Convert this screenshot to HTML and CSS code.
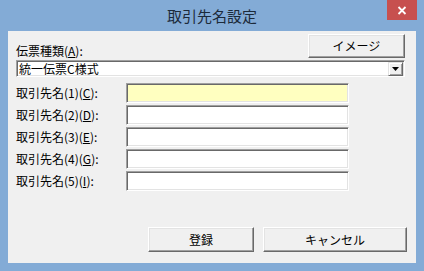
FILE: index.html
```html
<!DOCTYPE html>
<html lang="ja">
<head>
<meta charset="utf-8">
<title>取引先名設定</title>
<link rel="stylesheet" href="styles.css">
</head>
<body>
<div class="window">
  <div class="titlebar">
    <span class="title">取引先名設定</span>
    <div class="close"><svg width="10" height="9" viewBox="0 0 10 9"><path d="M1.5 1 L8.5 8 M8.5 1 L1.5 8" stroke="#fff" stroke-width="1.8" fill="none"/></svg></div>
  </div>
  <div class="client">
    <div class="toprow">
      <span class="label">伝票種類(<u>A</u>):</span>
      <div class="btn btn-image">イメージ</div>
    </div>
    <div class="combo">
      <span class="combo-text">統一伝票C様式</span>
      <div class="combo-arrow"><svg width="7" height="4" viewBox="0 0 7 4"><path d="M0 0 H7 L3.5 4 Z" fill="#000"/></svg></div>
    </div>
    <div class="fields">
      <div class="row"><span class="label">取引先名(1)(<u>C</u>):</span><div class="field active"></div></div>
      <div class="row"><span class="label">取引先名(2)(<u>D</u>):</span><div class="field"></div></div>
      <div class="row"><span class="label">取引先名(3)(<u>E</u>):</span><div class="field"></div></div>
      <div class="row"><span class="label">取引先名(4)(<u>G</u>):</span><div class="field"></div></div>
      <div class="row"><span class="label">取引先名(5)(<u>I</u>):</span><div class="field"></div></div>
    </div>
    <div class="buttons">
      <div class="btn btn-ok">登録</div>
      <div class="btn btn-cancel">キャンセル</div>
    </div>
  </div>
</div>
</body>
</html>
```
FILE: styles.css
```css
html, body {
  margin: 0;
  padding: 0;
  background: #83abd6;
}
.window {
  width: 424px;
  height: 271px;
  box-sizing: border-box;
  background: #83abd6;
  padding: 0 8px 8px 8px;
  font-family: "Noto Sans CJK JP", "Liberation Sans", sans-serif;
  font-size: 12px;
  color: #000;
}
.titlebar {
  position: relative;
  height: 31px;
  display: flex;
  justify-content: center;
  align-items: flex-start;
}
.title {
  font-size: 15px;
  line-height: 20px;
  padding-top: 6px;
  color: #1c2a3a;
  margin-left: 0;
}
.close {
  position: absolute;
  right: -1px;
  top: 0;
  width: 30px;
  height: 20px;
  background: #c7504f;
  display: flex;
  align-items: center;
  justify-content: center;
}
.client {
  background: #f0f0f0;
  height: 232px;
  box-sizing: border-box;
  padding: 3px 9px 0 8px;
  display: flex;
  flex-direction: column;
}
.toprow {
  display: flex;
  justify-content: space-between;
  align-items: flex-end;
  height: 24px;
  margin-right: 2px;
}
.label {
  line-height: 14px;
  white-space: nowrap;
}
.label u {
  text-decoration-thickness: 1px;
  text-underline-offset: 1px;
}
.btn {
  box-sizing: border-box;
  background: #f0f0f0;
  border-top: 1px solid #fff;
  border-left: 1px solid #fff;
  border-right: 1px solid #696969;
  border-bottom: 1px solid #696969;
  box-shadow: inset -1px -1px 0 #a0a0a0, inset 1px 1px 0 #e3e3e3;
  display: flex;
  align-items: center;
  justify-content: center;
  line-height: 14px;
}
.btn-image {
  width: 97px;
  height: 24px;
}
.combo {
  margin-top: 2px;
  margin-right: 2px;
  height: 17px;
  box-sizing: border-box;
  background: #fff;
  border-top: 1px solid #a0a0a0;
  border-left: 1px solid #a0a0a0;
  border-right: 1px solid #fff;
  border-bottom: 1px solid #fff;
  box-shadow: inset 1px 1px 0 #696969, inset -1px -1px 0 #e3e3e3;
  display: flex;
  align-items: center;
  padding: 0 1px 0 2px;
}
.combo-text {
  flex: 1;
  line-height: 14px;
}
.combo-arrow {
  width: 15px;
  height: 14px;
  box-sizing: border-box;
  background: #f0f0f0;
  border-top: 1px solid #e3e3e3;
  border-left: 1px solid #e3e3e3;
  border-right: 1px solid #696969;
  border-bottom: 1px solid #696969;
  box-shadow: inset 1px 1px 0 #fff, inset -1px -1px 0 #a0a0a0;
  display: flex;
  align-items: center;
  justify-content: center;
}
.fields {
  margin-top: 6px;
  display: flex;
  flex-direction: column;
  gap: 2px;
}
.row {
  display: flex;
  align-items: center;
  height: 20px;
}
.row .label {
  width: 110px;
}
.field {
  width: 223px;
  height: 20px;
  box-sizing: border-box;
  background: #fff;
  border-top: 1px solid #a0a0a0;
  border-left: 1px solid #a0a0a0;
  border-right: 1px solid #fff;
  border-bottom: 1px solid #fff;
  box-shadow: inset 1px 1px 0 #696969, inset -1px -1px 0 #e3e3e3;
}
.field.active {
  background: #ffffc0;
}
.buttons {
  margin-top: 36px;
  display: flex;
  justify-content: flex-end;
  gap: 9px;
}
.btn-ok {
  width: 106px;
  height: 25px;
}
.btn-cancel {
  width: 144px;
  height: 25px;
}
```
